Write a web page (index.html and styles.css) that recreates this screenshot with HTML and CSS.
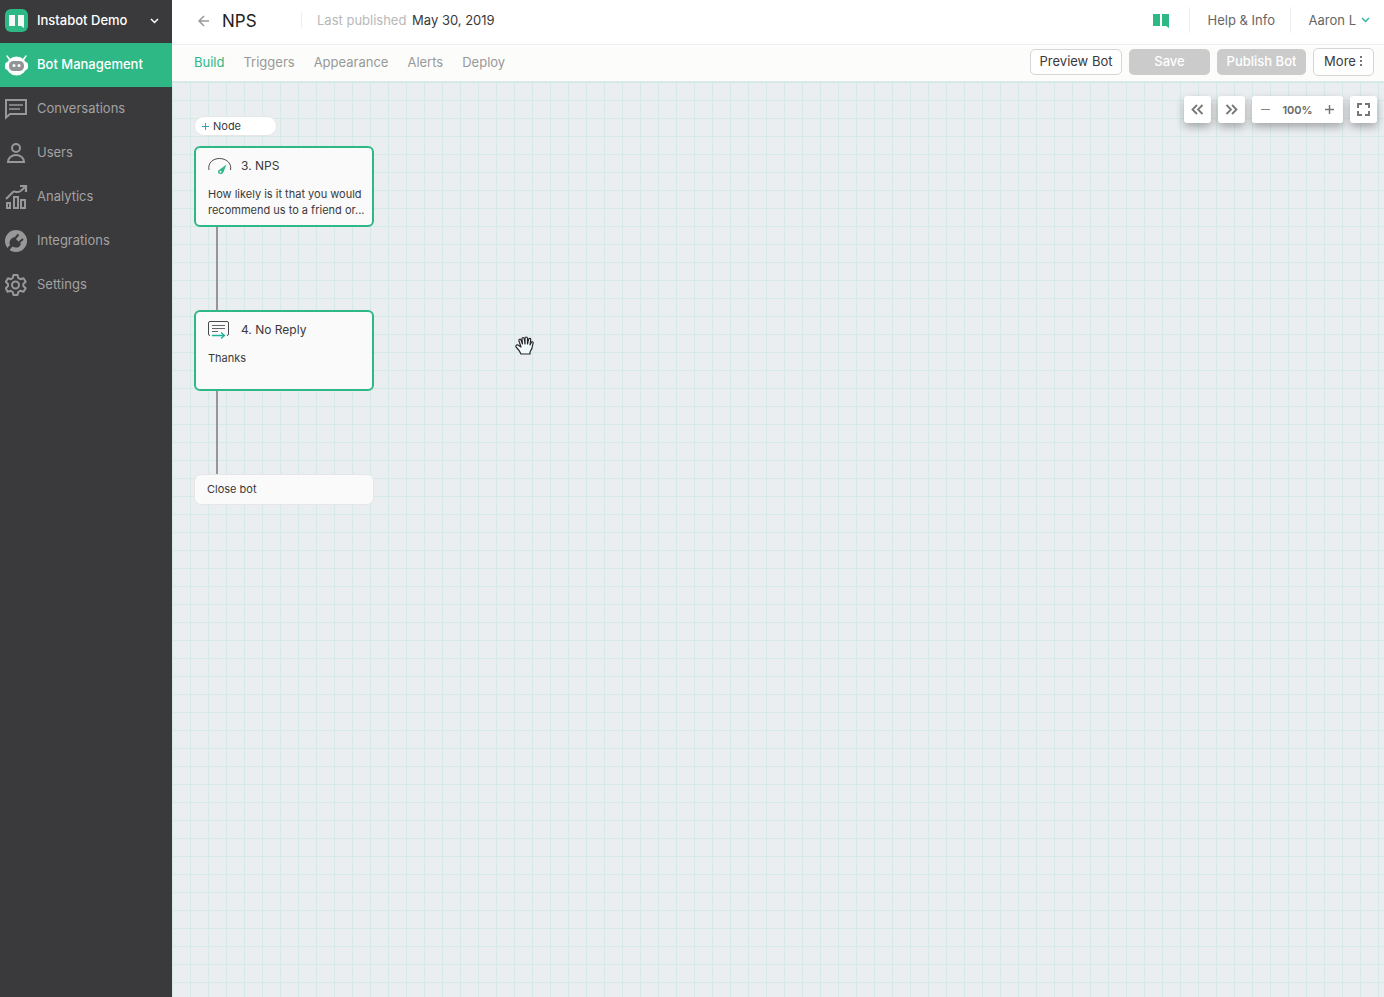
FILE: index.html
```html
<!DOCTYPE html>
<html lang="en">
<head>
    <meta charset="UTF-8">
    <meta name="viewport" content="width=device-width, initial-scale=1.0">
    <title>NPS - Instabot</title>
    <link rel="stylesheet" href="styles.css">
</head>
<body>
    <aside class="sidebar">
        <button class="account">
            <svg class="icon" width="24" height="24" viewBox="0 0 24 24">
                <rect x="0" y="0" width="23" height="23" rx="6" fill="#2eb886"/>
                <path d="M4 6h6v11H4zM13 6h6v13l-3-2h-3z" fill="#f4faf7"/>
            </svg>
            <span class="account-name">Instabot Demo</span>
            <svg width="9" height="6" viewBox="0 0 9 6"><path d="M1 1l3.5 3.5L8 1" fill="none" stroke="#fff" stroke-width="1.5"/></svg>
        </button>
        <nav class="menu">
            <a href="#" class="menu-item active">
                <svg class="icon" width="24" height="24" viewBox="0 0 24 24">
                    <path d="M2 3l3 4M21 3l-3 4" stroke="#fff" stroke-width="1.5" stroke-linecap="round"/>
                    <rect x="0" y="9" width="23" height="8" rx="3" fill="#fff"/>
                    <ellipse cx="11.5" cy="13" rx="10" ry="9.5" fill="#fff"/>
                    <rect x="4" y="8" width="15" height="10" rx="4.5" fill="#929497"/>
                    <circle cx="9" cy="12.5" r="1.5" fill="#fff"/>
                    <circle cx="14" cy="12.5" r="1.5" fill="#fff"/>
                </svg>
                <span>Bot Management</span>
            </a>
            <a href="#" class="menu-item">
                <svg class="icon" width="24" height="24" viewBox="0 0 24 24" fill="none" stroke="#989898">
                    <path d="M1 3h20v14H5l-4 3.5z" stroke-width="2"/>
                    <path d="M4 8h14M4 12h11" stroke-width="1.5"/>
                </svg>
                <span>Conversations</span>
            </a>
            <a href="#" class="menu-item">
                <svg class="icon" width="24" height="24" viewBox="0 0 24 24" fill="none" stroke="#989898" stroke-width="2">
                    <circle cx="11" cy="7" r="4"/>
                    <path d="M3 21c0-4 3.5-7 8-7s8 3 8 7z"/>
                </svg>
                <span>Users</span>
            </a>
            <a href="#" class="menu-item">
                <svg class="icon" width="24" height="24" viewBox="0 0 24 24" fill="none" stroke="#989898" stroke-width="2">
                    <path d="M1 14l7-7c1-1 2 0 4 0 3 0 4-1 8-5"/>
                    <path d="M15 1h6v6" stroke-width="2.200"/>
                    <path d="M2 18h3v5H2zM9 12h4v11H9zM16 15h4v8h-4z"/>
                </svg>
                <span>Analytics</span>
            </a>
            <a href="#" class="menu-item">
                <svg class="icon" width="24" height="24" viewBox="0 0 24 24">
                    <circle cx="11" cy="12" r="11" fill="#989898"/>
                    <path d="M6 10l3-2 7 7-2 3c-3 1-5 .5-6.500-.5L3.500 22 1.500 20 5 16c-1-2-.5-4 1-6z" fill="#3a393b"/>
                    <path d="M10 9.500l3.500-4M14 13.500l4-3.500" stroke="#3a393b" stroke-width="2"/>
                </svg>
                <span>Integrations</span>
            </a>
            <a href="#" class="menu-item">
                <svg class="icon" width="24" height="24" viewBox="0 0 24 24" fill="none" stroke="#989898" stroke-width="2" stroke-linejoin="round">
                    <path d="M8.500 2h4l.8 3 2 1.200 3.200-1 2.200 3.600-2.400 2.200v2l2.400 2.200-2.200 3.600-3.200-1-2 1.200-.8 3h-4l-.8-3-2-1.200-3.200 1L.8 15.200 3 13v-2L.8 8.800 3 5.200l3 1L7.700 5z"/>
                    <circle cx="10.5" cy="12" r="3.5"/>
                </svg>
                <span>Settings</span>
            </a>
        </nav>
    </aside>

    <main class="main">
        <header class="topbar">
            <a href="#" class="back" aria-label="Back">
                <svg width="12" height="12" viewBox="0 0 12 12"><path d="M11 6H1.500M6 1L1 6l5 5" fill="none" stroke="#999" stroke-width="1.5"/></svg>
            </a>
            <h1 class="title">NPS</h1>
            <p class="published"><span>Last published</span> <time datetime="2019-05-30">May 30, 2019</time></p>
            <svg class="brand" width="18" height="16" viewBox="0 0 18 16"><path d="M1 2h7v12H1zM10 2h7v14l-3-2h-4z" fill="#2eb886"/></svg>
            <a href="#" class="help">Help &amp; Info</a>
            <button class="profile">
                <span>Aaron L</span>
                <svg width="9" height="6" viewBox="0 0 9 6"><path d="M1 1l3.5 3.5L8 1" fill="none" stroke="#36b3a0" stroke-width="1.5"/></svg>
            </button>
        </header>

        <div class="toolbar">
            <nav class="tabs">
                <a href="#" class="tab current">Build</a>
                <a href="#" class="tab">Triggers</a>
                <a href="#" class="tab">Appearance</a>
                <a href="#" class="tab">Alerts</a>
                <a href="#" class="tab">Deploy</a>
            </nav>
            <div class="actions">
                <button class="btn preview">Preview Bot</button>
                <button class="btn save" disabled>Save</button>
                <button class="btn publish" disabled>Publish Bot</button>
                <button class="btn more">More
                    <svg width="3" height="11" viewBox="0 0 3 11" fill="#777"><path d="M0 1h2v2H0zM0 5h2v2H0zM0 9h2v2H0z"/></svg>
                </button>
            </div>
        </div>

        <section class="canvas">
            <div class="view-controls">
                <button class="control" aria-label="Previous">
                    <svg width="13" height="11" viewBox="0 0 13 11"><path d="M6 1L1.500 5.500 6 10M11.500 1L7 5.500l4.500 4.500" fill="none" stroke="#777" stroke-width="1.8"/></svg>
                </button>
                <button class="control" aria-label="Next">
                    <svg width="13" height="11" viewBox="0 0 13 11"><path d="M1.500 1L6 5.500 1.500 10M7 1l4.500 4.500L7 10" fill="none" stroke="#777" stroke-width="1.8"/></svg>
                </button>
                <div class="zoom">
                    <button class="control flat" aria-label="Zoom out">
                        <svg width="9" height="9" viewBox="0 0 9 9"><path d="M0 4.500h9" stroke="#888"/></svg>
                    </button>
                    <span class="zoom-value">100%</span>
                    <button class="control flat" aria-label="Zoom in">
                        <svg width="9" height="9" viewBox="0 0 9 9"><path d="M0 4.500h9M4.500 0v9" stroke="#777" stroke-width="1.5"/></svg>
                    </button>
                </div>
                <button class="control" aria-label="Full screen">
                    <svg width="13" height="13" viewBox="0 0 13 13"><path d="M1 5V1h4M8 1h4v4M12 8v4H8M5 12H1V8" fill="none" stroke="#777" stroke-width="2"/></svg>
                </button>
            </div>

            <div class="flow">
                <button class="add-node">
                    <svg width="7" height="7" viewBox="0 0 7 7"><path d="M0 3.500h7M3.500 0v7" stroke="#2fa3b5"/></svg>
                    Node
                </button>
                <article class="node">
                    <h2 class="node-title">
                        <svg width="24" height="18" viewBox="0 0 24 18">
                            <path d="M1 13C-.5 6 5 1.500 11.500 1.500S24 6 22.500 13" fill="none" stroke="#4b4950"/>
                            <path d="M18.500 7.500l-3 7.500c-1 3-6 2.500-5.500-.5.2-1.500 1.500-2 2.500-2.500z" fill="#2eb886"/>
                            <circle cx="12.500" cy="14.700" r="1" fill="#fafafa"/>
                        </svg>
                        <span>3. NPS</span>
                    </h2>
                    <p class="node-text">How likely is it that you would recommend us to a friend or...</p>
                </article>
                <div class="connector"></div>
                <article class="node">
                    <h2 class="node-title">
                        <svg width="24" height="18" viewBox="0 0 24 18" fill="none">
                            <path d="M2 14.500A1.500 1.500 0 0 1 .5 13V2A1.500 1.500 0 0 1 2 .5h17A1.500 1.500 0 0 1 20.500 2v11a1.500 1.500 0 0 1-1.500 1.500" stroke="#4b4950"/>
                            <path d="M4 4.500h13M4 7.500h13M4 10.500h6" stroke="#66646a" stroke-width="1.2"/>
                            <path d="M4 14.500h12M13 11.500l3.500 3-3.500 3" stroke="#20b39a" stroke-width="1.3"/>
                        </svg>
                        <span>4. No Reply</span>
                    </h2>
                    <p class="node-text">Thanks</p>
                </article>
                <div class="connector"></div>
                <div class="close-node">Close bot</div>
            </div>

            <svg class="hand" width="20" height="20" viewBox="0 0 20 20">
                <path d="M6 18C5 15 3 13 1.500 11.500 0 10 1.500 8.500 3 9l3 2-2-6c-.5-2 1.500-2.500 2-1l1.500 4L7 3c0-2 2-2 2.300 0L10 8V2.500C10 .5 12.500.5 12.500 2.500V8l1-4.500c.5-1.800 2.500-1.300 2.200.5L15 9l1.300-2.500c1-1.500 2.200-.5 1.700 1-.5 4-1 6-3 8.500v2z" fill="#f2fbfa" stroke="#26262a" stroke-width="1.2" stroke-linejoin="round"/>
            </svg>
        </section>
    </main>
</body>
</html>
```
FILE: styles.css
```css
* {
    box-sizing: border-box;
}
body {
    display: flex;
    min-height: 100vh;
    margin: 0;
    font-family: Inter, "Open Sans", sans-serif;
    font-size: 13px;
    line-height: 16px;
    color: #3a393b;
}
h1, h2, p {
    margin: 0;
    font-weight: 400;
}
a {
    color: inherit;
    text-decoration: none;
}
button {
    padding: 0;
    border: none;
    background: none;
    font: inherit;
    color: inherit;
    cursor: pointer;
}
svg {
    display: block;
    flex: none;
}

/* sidebar */
.sidebar {
    flex: none;
    width: 172px;
    background: #3a393b;
    color: #a3a3a3;
}
.account {
    display: flex;
    align-items: center;
    width: 100%;
    height: 43px;
    padding: 0 13px 2px 5px;
    color: #fff;
    font-weight: 500;
    text-align: left;
}
.account-name {
    flex: 1;
}
.icon {
    margin-right: 8px;
}
.menu-item {
    display: flex;
    align-items: center;
    height: 44px;
    padding: 0 5px;
}
.menu-item span,
.account-name {
    padding-bottom: 2px;
}
.menu-item.active {
    background: #2eb886;
    color: #fff;
    font-weight: 500;
}

/* header */
.main {
    display: flex;
    flex-direction: column;
    flex: 1;
    min-width: 0;
}
.topbar {
    display: flex;
    align-items: center;
    height: 45px;
    padding: 0 14px 4px 26px;
    border-bottom: 1px solid #f0f0f0;
    background: #fff;
}
.back,
.title {
    padding-top: 2px;
}
.title {
    width: 79px;
    margin-left: 12px;
    font-size: 17px;
    line-height: 20px;
    color: #222;
}
.published {
    padding-left: 15px;
    border-left: 1px solid #eee;
    color: #b8b8b8;
}
.published time {
    margin-left: 2px;
    color: #3a393b;
}
.brand {
    margin-left: auto;
    margin-right: 19px;
}
.help,
.profile {
    display: flex;
    align-items: center;
    height: 26px;
    border-left: 1px solid #eee;
    color: #666;
}
.help {
    width: 101px;
    padding-left: 18px;
}
.profile {
    gap: 5px;
    padding-left: 18px;
}
.toolbar {
    display: flex;
    align-items: center;
    justify-content: space-between;
    height: 37px;
    padding: 0 10px 2px 22px;
    border-bottom: 1px solid #dde9e8;
    background: #fcfcfa;
}
.tabs,
.actions {
    display: flex;
    align-items: center;
}
.tabs {
    gap: 19px;
    padding-bottom: 1px;
    color: #999;
}
.tab.current {
    color: #2eb886;
}
.actions {
    gap: 7px;
}
.btn {
    height: 26px;
    padding-bottom: 3px;
    border-radius: 5px;
    background: #fff;
}
.preview,
.more {
    border: 1px solid #d5d5d5;
}
.preview {
    width: 92px;
}
.save {
    width: 81px;
}
.publish {
    width: 89px;
}
.btn:disabled {
    background: #cbcbcb;
    color: #fff;
    font-weight: 500;
    cursor: default;
}
.more {
    display: flex;
    align-items: center;
    justify-content: center;
    gap: 4px;
    width: 61px;
    height: 28px;
}

/* canvas */
.canvas {
    position: relative;
    flex: 1;
    padding: 34px 22px;
    background-color: #ebeef1;
    background-image:
        linear-gradient(#d5e9e6 1px, transparent 1px),
        linear-gradient(90deg, #d5e9e6 1px, transparent 1px);
    background-size: 18px 18px;
    cursor: grab;
}
.view-controls {
    position: absolute;
    top: 14px;
    right: 7px;
    display: flex;
    gap: 7px;
}
.control,
.zoom {
    display: flex;
    align-items: center;
    justify-content: center;
    height: 27px;
    border-radius: 3px;
    background: #fff;
    box-shadow: 0 4px 8px rgba(0, 0, 0, 0.3);
}
.control {
    width: 27px;
}
.control.flat {
    box-shadow: none;
}
.zoom {
    justify-content: space-between;
    width: 91px;
}
.zoom-value {
    font-size: 11px;
    font-weight: 600;
    color: #666;
}
.flow {
    width: 180px;
    font-size: 11px;
}
.add-node {
    display: flex;
    align-items: center;
    gap: 4px;
    width: 83px;
    height: 20px;
    margin-bottom: 10px;
    padding-left: 7px;
    border: 1px solid #e6e6e6;
    border-radius: 10px;
    background: #fff;
}
.node {
    height: 81px;
    padding: 9px 6px 9px 12px;
    border: 2px solid #2eb886;
    border-radius: 6px;
    background: #fafafa;
}
.node-title {
    display: flex;
    align-items: center;
    gap: 9px;
    height: 18px;
    margin-bottom: 11px;
    font-size: 12px;
}
.connector {
    width: 2px;
    height: 83px;
    margin-left: 22px;
    background: #969696;
}
.close-node {
    height: 31px;
    padding: 6px 12px;
    border: 1px solid #e6e6e6;
    border-radius: 7px;
    background: #fafafa;
}
.hand {
    position: absolute;
    top: 254px;
    left: 343px;
}
```
